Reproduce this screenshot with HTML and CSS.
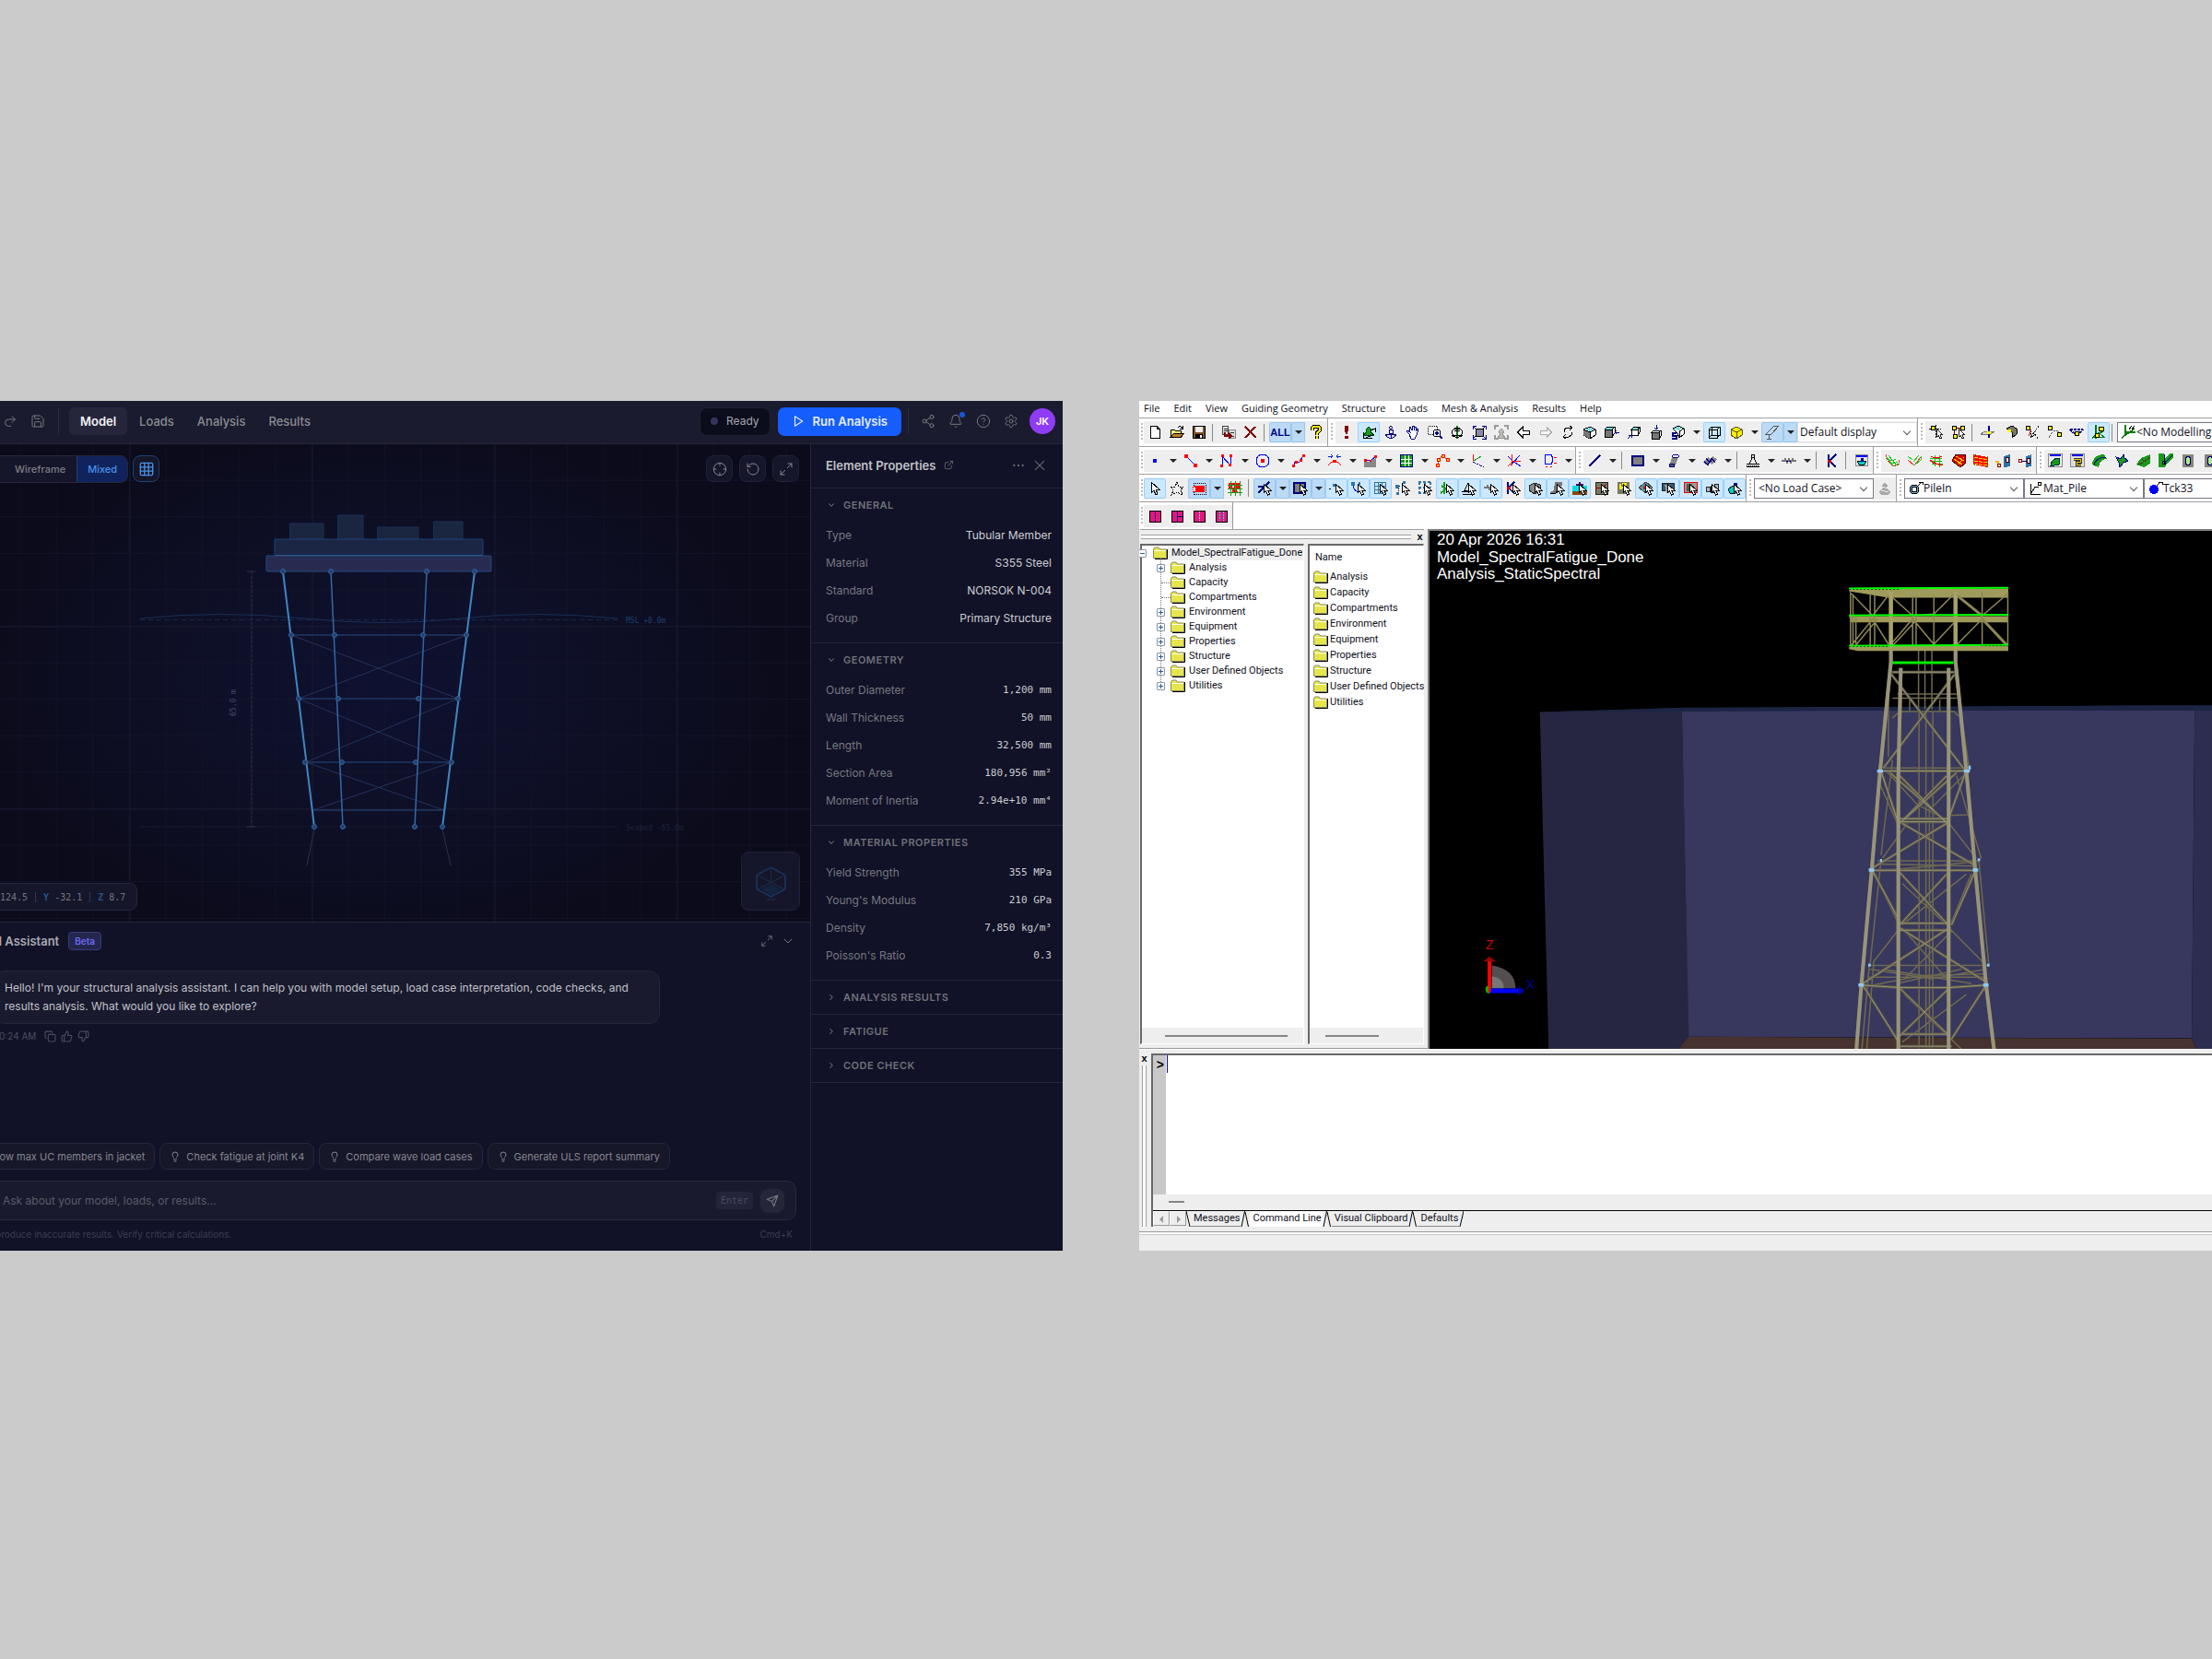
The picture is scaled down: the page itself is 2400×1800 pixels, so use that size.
FILE: index.html
```html
<!DOCTYPE html>
<html lang="en">
<head>
<meta charset="utf-8">
<title>Structural analysis workspaces</title>
<link rel="stylesheet" href="styles.css">
</head>
<body>
<svg class="defs" aria-hidden="true">
  <symbol id="cur" viewBox="0 0 16 16"><path d="M7 3v10l2.500-2.500 2 4.500 2-1-2-4H15z" fill="#fff" stroke="#000"/></symbol>
  <symbol id="folder" viewBox="0 0 16 14"><path d="M2 13.500h13.500V3" fill="none" stroke="#000" stroke-width="1"/><path d="M.5 12.500V3l1.500-2h4l1.500 2h7v9.500z" fill="#e6e64c" stroke="#8a8a6a"/><path d="M1.500 4.500h12.500" stroke="#fffff0"/></symbol>
  <symbol id="bulb" viewBox="0 0 24 24"><path d="M9 18h6M10 22h4M15 14c.2-1 .7-1.700 1.500-2.500A5.500 5.500 0 0 0 18 8 6 6 0 0 0 6 8c0 1 .2 2.200 1.500 3.500.7.7 1.300 1.500 1.500 2.500"/></symbol>
  <symbol id="down" viewBox="0 0 24 24"><path d="m6 9 6 6 6-6"/></symbol>
  <symbol id="next" viewBox="0 0 24 24"><path d="m9 6 6 6-6 6"/></symbol>
  <symbol id="expand" viewBox="0 0 24 24"><path d="M15 3h6v6M9 21H3v-6M21 3l-7 7M3 21l7-7"/></symbol>
  <symbol id="slant" viewBox="0 0 10 17"><path d="M4.500 0 1 17M5 1 8.500 17" fill="none" stroke="#000"/></symbol>
</svg>
<main class="desk">
<section class="app" aria-label="Modern workspace">
  <header class="bar">
    <button class="ib" aria-label="Undo"><svg viewBox="0 0 24 24"><path d="m9 14-5-5 5-5M4 9h10a6 6 0 0 1 0 12h-3"/></svg></button>
    <button class="ib" aria-label="Redo"><svg viewBox="0 0 24 24"><path d="m15 14 5-5-5-5M20 9H9.500a5.500 5.500 0 0 0 0 11H13"/></svg></button>
    <button class="ib" aria-label="Save"><svg viewBox="0 0 24 24"><path d="M15.200 3a2 2 0 0 1 1.400.6l3.800 3.800a2 2 0 0 1 .6 1.400V19a2 2 0 0 1-2 2H5a2 2 0 0 1-2-2V5a2 2 0 0 1 2-2zM17 21v-7a1 1 0 0 0-1-1H8a1 1 0 0 0-1 1v7M7 3v4a1 1 0 0 0 1 1h7"/></svg></button>
    <i class="rule rule-l"></i>
    <nav class="tabs"><button class="tab on">Model</button><button class="tab">Loads</button><button class="tab">Analysis</button><button class="tab">Results</button></nav>
    <span class="ready"><i></i>Ready</span>
    <button class="run"><svg viewBox="0 0 24 24"><path d="M6 3l14 9-14 9z"/></svg>Run Analysis</button>
    <i class="rule"></i>
    <button class="ib" aria-label="Share"><svg viewBox="0 0 24 24"><circle cx="18" cy="5" r="3"/><circle cx="6" cy="12" r="3"/><circle cx="18" cy="19" r="3"/><path d="m8.600 13.500 6.800 4M15.400 6.500l-6.800 4"/></svg></button>
    <button class="ib bell" aria-label="Notifications"><svg viewBox="0 0 24 24"><path d="M10.300 21a2 2 0 0 0 3.400 0M3.300 15.300A1 1 0 0 0 4 17h16a1 1 0 0 0 .7-1.700C19.400 14 18 12.500 18 8A6 6 0 0 0 6 8c0 4.500-1.400 6-2.700 7.300"/></svg></button>
    <button class="ib" aria-label="Help"><svg viewBox="0 0 24 24"><circle cx="12" cy="12" r="10"/><path d="M9.100 9a3 3 0 0 1 5.800 1c0 2-3 3-3 3M12 17h.01"/></svg></button>
    <button class="ib" aria-label="Settings"><svg viewBox="0 0 24 24"><path d="M12.200 2h-.4a2 2 0 0 0-2 2v.2a2 2 0 0 1-1 1.700l-.4.300a2 2 0 0 1-2 0l-.2-.1a2 2 0 0 0-2.700.7l-.2.400a2 2 0 0 0 .7 2.700l.2.100a2 2 0 0 1 1 1.700v.5a2 2 0 0 1-1 1.800l-.2.100a2 2 0 0 0-.7 2.700l.2.400a2 2 0 0 0 2.700.7l.2-.1a2 2 0 0 1 2 0l.4.300a2 2 0 0 1 1 1.700v.2a2 2 0 0 0 2 2h.4a2 2 0 0 0 2-2v-.2a2 2 0 0 1 1-1.700l.4-.3a2 2 0 0 1 2 0l.2.100a2 2 0 0 0 2.700-.7l.2-.4a2 2 0 0 0-.7-2.700l-.2-.1a2 2 0 0 1-1-1.800v-.5a2 2 0 0 1 1-1.700l.2-.1a2 2 0 0 0 .7-2.700l-.2-.4a2 2 0 0 0-2.700-.7l-.2.100a2 2 0 0 1-2 0l-.4-.3a2 2 0 0 1-1-1.700V4a2 2 0 0 0-2-2z"/><circle cx="12" cy="12" r="3"/></svg></button>
    <button class="avatar">JK</button>
  </header>
  <div class="work">
    <div class="left">
      <div class="viewport">
        <svg class="scene" viewBox="-40 482 919 518" preserveAspectRatio="xMidYMid meet">
          <defs>
            <pattern id="gmin" x="21" y="482" width="39.600" height="39.600" patternUnits="userSpaceOnUse"><path d="M0 0V39.600M0 39.400H39.600" stroke="#14152a" fill="none"/></pattern>
          </defs>
          <rect x="-40" y="482" width="920" height="518" fill="url(#gmin)"/>
          <path d="M141 482V1000M339 482V1000M537 482V1000M735 482V1000M-40 680H880M-40 878H880" stroke="#181a30"/>
          <g fill="#1a2540" stroke="#1d3153"><path d="M315 568h36v17h-36zM367 559h27v26h-27zM410 572h44v13h-44zM471 566h31v19h-31z"/></g>
          <rect x="298" y="585" width="226" height="18" rx="1" fill="#1b2645" stroke="#1f4074"/>
          <rect x="289" y="603" width="244" height="17" rx="1" fill="#282b50" stroke="#214a80"/>
          <path d="M299 602.500H523" stroke="#2c5a90"/>
          <path d="M152 671Q240 662 330 671T500 671T670 671" fill="none" stroke="#182f54"/>
          <path d="M152 672.500H670" stroke="#1a2746" stroke-dasharray="5 4"/>
          <path d="M152 897H670" stroke="#191a30"/>
          <g stroke="#24325a" fill="none"><path d="M316 689L497 758M506 689L324 758M324 758L490 827M497 758L332 827M332 827L482 879M490 827L340 879"/></g>
          <path d="M316 689H506M324 758H497M332 827H490M340 879H482" stroke="#264a7c" fill="none"/>
          <path d="M359 620L372 897M463 620L450 897" stroke="#3468a4" stroke-width="1.500" fill="none"/>
          <path d="M307 620L341 897M515 620L480 897" stroke="#4186c0" stroke-width="2" fill="none"/>
          <path d="M341 900L333 939M480 900L489 939" stroke="#2f2f50" fill="none"/>
          <g fill="#23406e" stroke="#32649c"><circle cx="307" cy="620" r="2.500"/><circle cx="359" cy="620" r="2.500"/><circle cx="463" cy="620" r="2.500"/><circle cx="515" cy="620" r="2.500"/><circle cx="316" cy="689" r="2.500"/><circle cx="363" cy="689" r="2.500"/><circle cx="459" cy="689" r="2.500"/><circle cx="506" cy="689" r="2.500"/><circle cx="324" cy="758" r="2.500"/><circle cx="367" cy="758" r="2.500"/><circle cx="454" cy="758" r="2.500"/><circle cx="497" cy="758" r="2.500"/><circle cx="331" cy="827" r="2.500"/><circle cx="371" cy="827" r="2.500"/><circle cx="451" cy="827" r="2.500"/><circle cx="490" cy="827" r="2.500"/><circle cx="341" cy="897" r="2.500"/><circle cx="372" cy="897" r="2.500"/><circle cx="450" cy="897" r="2.500"/><circle cx="480" cy="897" r="2.500"/></g>
          <path d="M273 620V897" stroke="#30304a" stroke-dasharray="3 2"/><path d="M268 620h9M268 897h9" stroke="#30304a"/>
          <text class="dim" transform="translate(256 777) rotate(-90)">65.0 m</text>
          <text class="msl" x="679" y="676">MSL +0.0m</text>
          <text class="bed" x="679" y="901">Seabed -65.0m</text>
        </svg>
        <div class="vt vt-l">
          <div class="seg"><button>Wireframe</button><button class="on">Mixed</button></div>
          <button class="vb on" aria-label="Grid"><svg viewBox="0 0 24 24"><rect x="2" y="2" width="20" height="20" rx="2"/><path d="M2 8.700h20M2 15.300h20M8.700 2v20M15.300 2v20"/></svg></button>
        </div>
        <div class="vt vt-r">
          <button class="vb" aria-label="Center"><svg viewBox="0 0 24 24"><circle cx="12" cy="12" r="10"/><path d="M22 12h-4M6 12H2M12 6V2M12 22v-4"/></svg></button>
          <button class="vb" aria-label="Reset"><svg viewBox="0 0 24 24"><path d="M3 12a9 9 0 1 0 9-9 9.800 9.800 0 0 0-6.700 2.700L3 8M3 3v5h5"/></svg></button>
          <button class="vb" aria-label="Fullscreen"><svg><use href="#expand"/></svg></button>
        </div>
        <div class="coords"><span>124.5</span><i></i><span><b>Y</b> -32.1</span><i></i><span><b>Z</b> 8.7</span></div>
        <button class="cube" aria-label="View cube"><svg viewBox="0 0 40 40"><path d="M20 23l11 5-11 7-11-7z" fill="#14233f" stroke="none"/><path d="M20 5l15 8v15l-15 8-15-8V13z" fill="none" stroke="#1c3560" stroke-width="1.500"/><path d="M5 13l15 8 15-8M20 5v16M6 28l14-7 14 7" fill="none" stroke="#1d2a45"/><path d="M16 39h8" stroke="#2a2c48"/></svg></button>
      </div>
      <section class="chat">
        <header class="chead"><h2>AI Assistant</h2><span class="beta">Beta</span><button class="ci" aria-label="Expand"><svg><use href="#expand"/></svg></button><button class="ci" aria-label="Collapse"><svg class="big"><use href="#down"/></svg></button></header>
        <div class="log">
          <p class="bubble">Hello! I'm your structural analysis assistant. I can help you with model setup, load case interpretation, code checks, and results analysis. What would you like to explore?</p>
          <div class="meta"><span>10:24 AM</span>
            <svg viewBox="0 0 24 24"><rect x="8" y="8" width="14" height="14" rx="2"/><path d="M4 16a2 2 0 0 1-2-2V4c0-1.100.9-2 2-2h10a2 2 0 0 1 2 2"/></svg>
            <svg viewBox="0 0 24 24"><path d="M7 10v12M15 5.900 14 10h5.800a2 2 0 0 1 2 2.600l-2.400 8a2 2 0 0 1-1.900 1.400H4a2 2 0 0 1-2-2v-8a2 2 0 0 1 2-2h2.800a2 2 0 0 0 1.800-1.100L12 2a3.100 3.100 0 0 1 3 3.900z"/></svg>
            <svg viewBox="0 0 24 24"><path d="M17 14V2M9 18.100 10 14H4.200a2 2 0 0 1-2-2.600l2.400-8A2 2 0 0 1 6.500 2H20a2 2 0 0 1 2 2v8a2 2 0 0 1-2 2h-2.800a2 2 0 0 0-1.800 1.100L12 22a3.100 3.100 0 0 1-3-3.900z"/></svg>
          </div>
        </div>
        <div class="chips"><button><svg><use href="#bulb"/></svg>Show max UC members in jacket</button><button><svg><use href="#bulb"/></svg>Check fatigue at joint K4</button><button><svg><use href="#bulb"/></svg>Compare wave load cases</button><button><svg><use href="#bulb"/></svg>Generate ULS report summary</button></div>
        <div class="ask"><input type="text" aria-label="Message" placeholder="Ask about your model, loads, or results..."><kbd>Enter</kbd><button aria-label="Send"><svg viewBox="0 0 24 24"><path d="M22 2 15 22l-4-9-9-4zM22 2 11 13"/></svg></button></div>
        <footer class="note"><span>AI may produce inaccurate results. Verify critical calculations.</span><span>Cmd+K</span></footer>
      </section>
    </div>
    <aside class="props">
      <header class="phead"><h2>Element Properties</h2><svg viewBox="0 0 24 24"><path d="M15 3h6v6M10 14 21 3M18 13v6a2 2 0 0 1-2 2H5a2 2 0 0 1-2-2V8a2 2 0 0 1 2-2h6"/></svg><button aria-label="More"><svg viewBox="0 0 24 24"><circle cx="4" cy="12" r="1"/><circle cx="12" cy="12" r="1"/><circle cx="20" cy="12" r="1"/></svg></button><button aria-label="Close"><svg viewBox="0 0 24 24"><path d="M20 4 4 20M4 4l16 16"/></svg></button></header>
      <section class="grp"><h3><svg><use href="#down"/></svg>GENERAL</h3><dl><div><dt>Type</dt><dd>Tubular Member</dd></div><div><dt>Material</dt><dd>S355 Steel</dd></div><div><dt>Standard</dt><dd>NORSOK N-004</dd></div><div><dt>Group</dt><dd>Primary Structure</dd></div></dl></section>
      <section class="grp num"><h3><svg><use href="#down"/></svg>GEOMETRY</h3><dl><div><dt>Outer Diameter</dt><dd>1,200 mm</dd></div><div><dt>Wall Thickness</dt><dd>50 mm</dd></div><div><dt>Length</dt><dd>32,500 mm</dd></div><div><dt>Section Area</dt><dd>180,956 mm²</dd></div><div><dt>Moment of Inertia</dt><dd>2.94e+10 mm⁴</dd></div></dl></section>
      <section class="grp num"><h3><svg><use href="#down"/></svg>MATERIAL PROPERTIES</h3><dl><div><dt>Yield Strength</dt><dd>355 MPa</dd></div><div><dt>Young's Modulus</dt><dd>210 GPa</dd></div><div><dt>Density</dt><dd>7,850 kg/m³</dd></div><div><dt>Poisson's Ratio</dt><dd>0.3</dd></div></dl></section>
      <section class="grp"><h3><svg><use href="#next"/></svg>ANALYSIS RESULTS</h3></section>
      <section class="grp"><h3><svg><use href="#next"/></svg>FATIGUE</h3></section>
      <section class="grp"><h3><svg><use href="#next"/></svg>CODE CHECK</h3></section>
    </aside>
  </div>
</section>

<section class="win" aria-label="Classic workspace">
  <nav class="menu"><button>File</button><button>Edit</button><button>View</button><button>Guiding Geometry</button><button>Structure</button><button>Loads</button><button>Mesh &amp; Analysis</button><button>Results</button><button>Help</button></nav>
  <div class="row">
    <i class="grip first"></i>
    <div class="band">
      <button class="t" title="New"><svg viewBox="0 0 16 16"><path d="M3 1.500h7l3 3v10H3z" fill="#fff" stroke="#000"/><path d="M10 1.500v3h3" fill="none" stroke="#000"/></svg></button>
      <button class="t" title="Open"><svg viewBox="0 0 16 16"><path d="M1 13V5h4l1 1h6v3" fill="#ffff80" stroke="#000"/><path d="M1 13.500 5 9h11l-4 4.500z" fill="#c08030" stroke="#000"/><path d="M9 3q3-3 5 1M14 1v3h-3" fill="none" stroke="#000"/></svg></button>
      <button class="t" title="Save"><svg viewBox="0 0 16 16"><path d="M1.500 1.500h13v13h-13z" fill="#805020" stroke="#000"/><path d="M4 2h8v6H4z" fill="#eee"/><path d="M4 10h8v4H4z" fill="#000"/><path d="M9 11h2v3H9z" fill="#fff"/></svg></button>
      <i class="sep"></i>
      <button class="t" title="Copy"><svg viewBox="0 0 16 16"><path d="M1.500 1.500h6v9h-6z" fill="#ddd" stroke="#444"/><path d="M8.500 5.500h7v9h-7z" fill="#ddd" stroke="#888"/><path d="M3 4h4M3 6h4M10 8h4M10 12h4" stroke="#333"/><path d="M4 8v4h6M8 9l3 3-3 3" stroke="#800000" fill="none" stroke-width="2"/></svg></button>
      <button class="t" title="Delete"><svg viewBox="0 0 16 16"><path d="M2 2l12 12M13 2 2 14" stroke="#800000" stroke-width="2"/></svg></button>
      <i class="sep"></i>
      <button class="t on all">ALL</button><button class="a on" aria-label="More"></button>
      <button class="t" title="Help"><svg viewBox="0 0 16 16"><path d="M4 6V3l2-1.500h4L12 3v3L9 8.500V11M8.500 12v3" stroke="#000" stroke-width="4" fill="none"/><path d="M4 6V3l2-1.500h4L12 3v3L9 8.500V11M8.500 12v3" stroke="#ffe800" stroke-width="2" fill="none"/></svg></button>
    </div>
    <i class="grip"></i>
    <div class="band">
      <button class="t" title="Alert"><svg viewBox="0 0 16 16"><path d="M6 1h4v4l-1 5H7L6 5zM6 12h4v3H6z" fill="#800000"/></svg></button>
      <button class="t on" title="View tools"><svg viewBox="0 0 16 16"><path d="M8 2l3 3-1 2 3 4H3l3-4-1-2z" fill="#1a9a1a" stroke="#042"/><path d="M2 8v6h10M10 6l5-2v4M5 14l9-4" stroke="#000" fill="none"/></svg></button>
      <button class="t" title="Anchor"><svg viewBox="0 0 16 16"><path d="M8 1l2 2-2 2-2-2zM6 5h4v4H6zM2 10h12l-2 3-4 2-4-2zM8 9v5" fill="#dde" stroke="#000080"/></svg></button>
      <button class="t" title="Pan"><svg viewBox="0 0 16 16"><path d="M4 10 1 7l1-1 3 2-1-5 1-1 2 4V1h2v5l1-4h1v5l2-3 1 1-2 6-2 4H6z" fill="#fff" stroke="#000080"/></svg></button>
      <button class="t" title="Zoom window"><svg viewBox="0 0 16 16"><path d="M.5 1.500h10v9H.5z" fill="none" stroke="#000" stroke-dasharray="1 1"/><circle cx="10" cy="9" r="4" fill="#fff" stroke="#000"/><path d="M13 12l3 3M8 9h4M10 7v4" stroke="#000080" stroke-width="1.500"/></svg></button>
      <button class="t" title="Rotate"><svg viewBox="0 0 16 16"><path d="M7 1h2v14H7z" fill="#0a7a0a"/><ellipse cx="8" cy="8" rx="6" ry="4" fill="none" stroke="#000"/><path d="M2 11q6 5 12 0M5 3h6M5 6h6" fill="none" stroke="#000"/></svg></button>
      <button class="t" title="Fit all"><svg viewBox="0 0 16 16"><path d="M4 4h8v8H4z" fill="#88a" stroke="#000"/><path d="M1 5V1h4M11 1h4v4M15 11v4h-4M5 15H1v-4M1 1l3 3M15 1l-3 3M1 15l3-3M15 15l-3-3" fill="none" stroke="#000080"/></svg></button>
      <button class="t" title="Fit selection"><svg viewBox="0 0 16 16"><path d="M8 4l3 3-2 3 3 4H4l3-4-2-3z" fill="#bbb" stroke="#999"/><path d="M1 5V1h4M11 1h4v4M15 11v4h-4M5 15H1v-4" fill="none" stroke="#999" stroke-width="1.500"/></svg></button>
      <button class="t" title="Back"><svg viewBox="0 0 16 16"><path d="M1.500 8 7 2.500V6h7v4H7v3.500z" fill="#fff" stroke="#000"/></svg></button>
      <button class="t" title="Forward"><svg viewBox="0 0 16 16"><path d="M14.500 8 9 2.500V6H2v4h7v3.500z" fill="#f4f4f4" stroke="#aaa"/></svg></button>
      <button class="t" title="Refresh"><svg viewBox="0 0 16 16"><path d="M4 8V5l3-2h5M10 1l3 2-3 3M12 8v3l-3 2H4M6 10l-3 3 3 2" fill="none" stroke="#000"/></svg></button>
      <button class="t" title="Iso"><svg viewBox="0 0 16 16"><path d="M1 5l7-3 6 3v6l-6 4-7-4z" fill="#fff" stroke="#000"/><path d="M1 5l7 3v7l-7-4z" fill="#777"/><path d="M3 5l5-2 4 2-4 2z" fill="#7dd"/><path d="M1 5l7 3 6-3M8 8v7" fill="none" stroke="#000"/></svg></button>
      <button class="t" title="From right"><svg viewBox="0 0 16 16"><path d="M0 5h8v8H0z" fill="#777" stroke="#000"/><path d="M0 5l3-3h8L8 5z" fill="#7dd" stroke="#000"/><path d="M11 2v7l-3 4" fill="none" stroke="#000"/><path d="M16 8h-5M13 6l-2 2 2 2" stroke="#000080" fill="none"/></svg></button>
      <button class="t" title="From front"><svg viewBox="0 0 16 16"><path d="M5 5h7v6H5z" fill="#fff" stroke="#000"/><path d="M5 5l3-3h6l-2 3z" fill="#7dd" stroke="#000"/><path d="M14 2v6l-2 3" stroke="#000" fill="none"/><path d="M1 15l4-4M2 11h3v3" stroke="#000080" fill="none"/></svg></button>
      <button class="t" title="From top"><svg viewBox="0 0 16 16"><path d="M3 8h8v7H3z" fill="#777" stroke="#000"/><path d="M3 8l2-2h8l-2 2zM13 6v6l-2 3" fill="#fff" stroke="#000"/><path d="M8 0v5M6 3l2 2 2-2" stroke="#000080" fill="none"/></svg></button>
      <button class="t" title="Saved view"><svg viewBox="0 0 16 16"><path d="M2 4l6-3 6 3v6l-5 4-2-5z" fill="#fff" stroke="#000"/><path d="M3 4l5-2 4 2-4 2z" fill="#7dd"/><path d="M9 7v7M9 7l5-3" stroke="#000"/><path d="M6 9H2v3h4v3H1" fill="none" stroke="#000080" stroke-width="1.500"/></svg></button><button class="a" aria-label="More"></button>
      <button class="t on" title="Wire cube"><svg viewBox="0 0 16 16"><path d="M2 5h9v9H2zM5 2h9v9H5zM2 5l3-3M11 5l3-3M11 14l3-3M2 14l3-3" fill="none" stroke="#000"/></svg></button>
      <button class="t" title="Solid cube"><svg viewBox="0 0 16 16"><path d="M2 5l6-3 6 3v6l-6 4-6-4z" fill="#ffee00" stroke="#553"/><path d="M2 5l6 3 6-3M8 8v7" fill="none" stroke="#553"/></svg></button><button class="a" aria-label="More"></button>
      <button class="t sp" title="Profile"><svg viewBox="0 0 16 16"><path d="M1 10 10 1h5L7 10zM2 15h5M4.500 10v5" fill="none" stroke="#555"/></svg></button><button class="a sp" aria-label="More"></button>
      <label class="combo w128 soft"><select aria-label="Display mode"><option>Default display</option></select></label>
    </div>
    <i class="grip"></i>
    <div class="band">
      <button class="t" title="Snap A"><svg viewBox="0 0 16 16"><path d="M0 4h13M7 0v14" stroke="#000" stroke-dasharray="2 1"/><path d="M2 1.500h4v4H2z" fill="#ff0" stroke="#000"/><use href="#cur" width="14" height="14" x="2" y="2"/></svg></button>
      <button class="t" title="Snap B"><svg viewBox="0 0 16 16"><path d="M3 3h10M3 3v9" stroke="#800000"/><path d="M1 1.500h4v4H1zM10 1.500h4v4h-4zM2 10.500h4v4H2z" fill="#ff0" stroke="#000"/><use href="#cur" width="14" height="14" x="2" y="2"/></svg></button>
      <i class="sep"></i>
      <button class="t" title="Snap point"><svg viewBox="0 0 16 16"><path d="M0 10h11l4-3H5z" fill="#ddd" stroke="#777"/><path d="M9 1v13" stroke="#000080" stroke-width="1.500"/><path d="M7 7h4v3H7z" fill="#ff0"/></svg></button>
      <button class="t" title="Snap face"><svg viewBox="0 0 16 16"><path d="M4 4l6-3 5 3v6l-5 4V8z" fill="#776" stroke="#000"/><path d="M5 5h4v3H5z" fill="#ff0"/></svg></button>
      <button class="t" title="Snap curve"><svg viewBox="0 0 16 16"><path d="M15 1 6 14M6 6v8l5-4 3 5" stroke="#000" fill="none" stroke-dasharray="2 1"/><path d="M7 5 4 12" stroke="#d00"/><path d="M1 1.500h4v4H1z" fill="#ff0" stroke="#000"/></svg></button>
      <button class="t" title="Snap arc"><svg viewBox="0 0 16 16"><path d="M2 14Q7 2 15 9" fill="none" stroke="#555" stroke-dasharray="3 1"/><path d="M1 1.500h4v4H1zM11 8.500h4v4h-4z" fill="#ff0" stroke="#000"/></svg></button>
      <button class="t" title="Snap box"><svg viewBox="0 0 16 16"><path d="M1 5h14M1 5q7 9 14 0" fill="none" stroke="#000080" stroke-width="1.500" stroke-dasharray="3 1"/><path d="M6 7.500h4v4H6z" fill="#ff0" stroke="#000"/></svg></button>
      <button class="t on" title="Local axes"><svg viewBox="0 0 16 16"><path d="M5 0v15M1 14 14 6" stroke="#087a08" stroke-width="2"/><path d="M8 2.500h5v4H8zM4 9.500h4v4H4z" fill="#ff0" stroke="#000"/><path d="M9 13h6M7 8l7 5" stroke="#087a08"/></svg></button>
      <i class="sep"></i>
      <label class="combo w170"><svg viewBox="0 0 16 16"><path d="M4 0v11M0 14 14 4M4 8h11" stroke="#087a08" stroke-width="1.500"/><path d="M8 5l3-4M11 5l3-4" stroke="#000"/></svg><select aria-label="Modelling set"><option>&lt;No Modelling Set&gt;</option></select></label>
    </div>
  </div>
  <div class="row">
    <i class="grip first"></i>
    <div class="band">
      <button class="t" title="Point"><svg viewBox="0 0 16 16"><path d="M6 6h4v4H6z" fill="#00f"/></svg></button><button class="a" aria-label="More"></button>
      <button class="t" title="Line"><svg viewBox="0 0 16 16"><path d="M3 3l10 10" stroke="#00f"/><path d="M1 1h4v4H1zM11 11h4v4h-4z" fill="red"/></svg></button><button class="a" aria-label="More"></button>
      <button class="t" title="Polyline"><svg viewBox="0 0 16 16"><path d="M3 14V3l9 10V2" fill="none" stroke="#00f"/><path d="M1 12h3v3H1zM2 1h3v3H2zM10 11h3v3h-3zM11 1h3v3h-3z" fill="red"/></svg></button><button class="a" aria-label="More"></button>
      <button class="t" title="Circle"><svg viewBox="0 0 16 16"><circle cx="8" cy="8" r="7" fill="none" stroke="#00f"/><path d="M6 6h4v4H6z" fill="red"/></svg></button><button class="a" aria-label="More"></button>
      <button class="t" title="Spline"><svg viewBox="0 0 16 16"><path d="M3 13V9h6l4-7" fill="none" stroke="#00f"/><path d="M1 12h3v3H1zM4 8h3v3H4zM9 6h3v3H9zM12 1h3v3h-3z" fill="red"/></svg></button><button class="a" aria-label="More"></button>
      <button class="t" title="Tangent"><svg viewBox="0 0 16 16"><path d="M1 3h5M4 1l2 2-2 2M15 3h-5M12 1l-2 2 2 2" fill="none" stroke="#0020c0"/><path d="M1 13q7-9 14 0" fill="none" stroke="red"/><path d="M6 7h4v3H6z" fill="red"/></svg></button><button class="a" aria-label="More"></button>
      <button class="t" title="Profile curve"><svg viewBox="0 0 16 16"><path d="M1 9h5l3-2 5-2v10H1z" fill="#888"/><path d="M2 7q6 3 11-4" fill="none" stroke="#00f"/><path d="M1 6h3v3H1zM12 2h3v3h-3zM7 7h2v2H7z" fill="red"/></svg></button><button class="a" aria-label="More"></button>
      <button class="t" title="Grid"><svg viewBox="0 0 16 16"><path d="M1.500 1.500h13v13h-13z" fill="#1a9a1a" stroke="#008"/><path d="M6 2v12M10 2v12M2 6h12M2 10h12" stroke="#fff"/></svg></button><button class="a" aria-label="More"></button>
      <button class="t" title="Path"><svg viewBox="0 0 16 16"><path d="M3 14V7l5-5 5 5" fill="none" stroke="#a06020"/><path d="M1.500 11.500h3v3h-3zM2 5.500h3v3H2zM7 1.500h3v3H7zM12 5.500h3v3h-3z" fill="#fd0" stroke="red"/></svg></button><button class="a" aria-label="More"></button>
      <button class="t" title="Rays"><svg viewBox="0 0 16 16"><path d="M2 1v7" stroke="red"/><path d="M3 8l8-5" stroke="#1a9a1a"/><path d="M2 9l12 6" stroke="#008" stroke-dasharray="3 1"/></svg></button><button class="a" aria-label="More"></button>
      <button class="t" title="Intersect"><svg viewBox="0 0 16 16"><path d="M1 3l5 5M14 2 4 13" stroke="#00f"/><path d="M6 8l9 6" stroke="#00f"/><path d="M5 1v12M1 14l6-6h8" stroke="red" fill="none"/></svg></button><button class="a" aria-label="More"></button>
      <button class="t" title="Offset"><svg viewBox="0 0 16 16"><path d="M3 1.500h6l1 2v6l-1 2H3l-1-2v-6z" fill="none" stroke="#00f"/><path d="M12 4h3M12 10h3M3 14h2M8 14h2" stroke="red"/></svg></button><button class="a" aria-label="More"></button>
    </div>
    <i class="grip"></i>
    <div class="band">
      <button class="t" title="Beam"><svg viewBox="0 0 16 16"><path d="M2 14 14 2" stroke="#000080" stroke-width="1.500"/></svg></button><button class="a" aria-label="More"></button>
      <i class="sep"></i>
      <button class="t" title="Plate"><svg viewBox="0 0 16 16"><path d="M2 3h12v10H2z" fill="#808080" stroke="#000080" stroke-width="2"/></svg></button><button class="a" aria-label="More"></button>
      <button class="t" title="Shell"><svg viewBox="0 0 16 16"><path d="M3 12 7 3h6l-3 10q-4 4-7-1z" fill="#888"/><ellipse cx="10" cy="3" rx="3.500" ry="2" fill="#fff" stroke="#000080"/><ellipse cx="6" cy="13" rx="3" ry="2" fill="#556" stroke="#000080"/></svg></button><button class="a" aria-label="More"></button>
      <button class="t" title="Corrugated"><svg viewBox="0 0 16 16"><path d="M1 10l5-6 3 2 2-3 5 3-5 6-3-2-2 3z" fill="#888"/><path d="M4 6l4 3 2-3 4 3M2 9l4 3 3-4" fill="none" stroke="#000080" stroke-width="1.500"/></svg></button><button class="a" aria-label="More"></button>
      <i class="sep"></i>
      <button class="t" title="Support"><svg viewBox="0 0 16 16"><circle cx="8" cy="3" r="2" fill="none" stroke="#000"/><path d="M7 5 4 11h8L9 5M1 11.500h14M1 14h14" fill="none" stroke="#000"/><path d="M1 14h14" stroke="#000" stroke-width="2" stroke-dasharray="1 1"/></svg></button><button class="a" aria-label="More"></button>
      <button class="t" title="Spring"><svg viewBox="0 0 16 16"><path d="M0 8h3l1-2 2 4 2-4 2 4 2-4 1 2h3" fill="none" stroke="#777" stroke-width="1.500"/><path d="M5 8h6" stroke="#000080" stroke-dasharray="2 1"/></svg></button><button class="a" aria-label="More"></button>
      <i class="sep"></i>
      <button class="t" title="Joint"><svg viewBox="0 0 16 16"><path d="M4 1v14M12 1 5 8l7 7" fill="none" stroke="#000080" stroke-width="1.500"/><path d="M3 7h4v3H3z" fill="#c00"/></svg></button>
      <i class="sep"></i>
      <button class="t" title="Equipment"><svg viewBox="0 0 16 16"><path d="M1.500 1.500h13v12h-13z" fill="#e8e8e8" stroke="#888"/><path d="M2 3h12" stroke="#00f" stroke-width="2"/><path d="M3 8h10l-2 4H5z" fill="#0cc" stroke="#000"/><path d="M7 5h3v4H7z" fill="#008"/></svg></button>
    </div>
    <i class="grip"></i>
    <div class="band">
      <button class="t" title="Load mesh"><svg viewBox="0 0 16 16"><path d="M1 3l8 10M4 2l8 10M2 6q6 3 10 0M5 10q5 2 9-1M8 13q4 1 7-2" fill="none" stroke="#1c1"/><path d="M1 1v4l8 9 6-2V7" fill="none" stroke="#e33" stroke-dasharray="3 1"/></svg></button>
      <button class="t" title="Load V"><svg viewBox="0 0 16 16"><path d="M1 7l7 6 7-9" fill="none" stroke="#e33"/><path d="M1 3l5 4M7 9l6-7M8 13l7-6V3" fill="none" stroke="#1c1"/></svg></button>
      <button class="t" title="Load surface"><svg viewBox="0 0 16 16"><path d="M1 5h13M1 8h13M3 11h12M6 2v12M11 2v13" fill="none" stroke="#1b1"/><path d="M2 3q7 4 12 0M1 7q7 6 14 5M4 10l9 3" fill="none" stroke="red"/></svg></button>
      <button class="t" title="Pressure A"><svg viewBox="0 0 16 16"><path d="M1 8 5 1h10v10l-5 4z" fill="#d00" stroke="#400"/><path d="M3 6l9 6M5 3l9 5M8 12l6-8" stroke="#fd0" stroke-dasharray="3 1"/></svg></button>
      <button class="t" title="Pressure B"><svg viewBox="0 0 16 16"><path d="M0 1l16 3v11L0 12z" fill="#f00"/><path d="M1 4.500l14 2M1 8l14 2M1 11l14 2" stroke="#fd0" stroke-width="1" stroke-dasharray="4 1"/><path d="M1 1v12M15 3v12" stroke="#1a1" stroke-dasharray="2 3"/></svg></button>
      <button class="t" title="Point mass"><svg viewBox="0 0 16 16"><path d="M9 3l7-2v13l-7 1z" fill="#2e74a8"/><ellipse cx="13" cy="7" rx="2" ry="3" fill="#fff" stroke="#400"/><path d="M0 9h3v3" stroke="#eb0" fill="none" stroke-width="2"/><circle cx="4" cy="13" r="2" fill="#ee8" stroke="#800"/></svg></button>
      <button class="t" title="Link"><svg viewBox="0 0 16 16"><path d="M9 3l6-2v13l-6 1z" fill="#2e74a8"/><ellipse cx="12" cy="8" rx="2" ry="3" fill="#fff" stroke="#400"/><circle cx="3" cy="8" r="2" fill="#fff" stroke="#800"/><path d="M5 8h5" stroke="#006"/></svg></button>
    </div>
    <i class="grip"></i>
    <div class="band">
      <button class="t" title="Mesh window"><svg viewBox="0 0 16 16"><path d="M.5.5h15v14H.5z" fill="#eee" stroke="#888"/><path d="M2 2h12" stroke="#00f" stroke-width="2"/><path d="M3 13Q4 5 12 5v7l-5 1z" fill="#1a9a1a" stroke="#024"/></svg></button>
      <button class="t" title="Mesh options"><svg viewBox="0 0 16 16"><path d="M.5.5h15v14H.5z" fill="#ddd" stroke="#888"/><path d="M2 2h12" stroke="#00f" stroke-width="2"/><path d="M4 6h7v3H7v3h5" fill="none" stroke="#333" stroke-width="3"/><path d="M4 6h7v3H7v3h5" fill="none" stroke="#ec0"/></svg></button>
      <button class="t" title="Mesh curved"><svg viewBox="0 0 16 16"><path d="M0 12Q1 1 13 1l3 5Q8 6 7 15z" fill="#1a9a1a"/><path d="M2 13Q4 4 15 4" fill="none" stroke="#008"/></svg></button>
      <button class="t" title="Mesh patch"><svg viewBox="0 0 16 16"><path d="M2 4l5 2 3-5 1 4 4 3-5 2-4 5-1-5z" fill="#1a9a1a" stroke="#008"/></svg></button>
      <button class="t" title="Mesh split"><svg viewBox="0 0 16 16"><path d="M0 12 5 5l10-4v10l-7 4z" fill="#1a9a1a"/><path d="M2 12l5-2 8-6M6 6l3 3" fill="none" stroke="#533"/></svg></button>
      <button class="t" title="Mesh joint"><svg viewBox="0 0 16 16"><path d="M0 0h6v6l6-6h4v4L8 13l-2 2H0z" fill="#1a9a1a"/><path d="M6 1v10l9-9" stroke="#008" fill="none"/><circle cx="6" cy="10" r="2" fill="none" stroke="#004"/></svg></button>
      <button class="t" title="Hole A"><svg viewBox="0 0 16 16"><path d="M2 1h12v14H2z" fill="#8a8578"/><ellipse cx="8" cy="8" rx="3" ry="4.500" fill="#aee8a0" stroke="#006"/></svg></button>
      <button class="t" title="Hole B"><svg viewBox="0 0 16 16"><path d="M2 1h12v14H2z" fill="#8a8578"/><ellipse cx="8" cy="8" rx="3" ry="4.500" fill="#aee8a0" stroke="#006"/></svg></button>
    </div>
  </div>
  <div class="row">
    <i class="grip first"></i>
    <div class="band">
      <button class="t on" title="Select"><svg viewBox="0 0 16 16"><path d="M4 1v12l3-3 2 5 2-1-2-5h4z" fill="#fff" stroke="#000"/></svg></button>
      <button class="t" title="Lasso"><svg viewBox="0 0 16 16"><path d="M8 1l2 5h5l-3 4 2 5-6-3-6 3 2-5-3-4h5z" fill="none" stroke="#000" stroke-dasharray="2 1"/></svg></button>
      <button class="t sp" title="Box select"><svg viewBox="0 0 16 16"><path d="M2 2.500h13v12H2z" fill="none" stroke="#000" stroke-dasharray="1 1"/><path d="M2 5h12v7H2z" fill="#f00"/><path d="M1 6h3v5H1z" fill="#fff" stroke="#f00" stroke-dasharray="1 1"/></svg></button><button class="a sp" aria-label="More"></button>
      <button class="t" title="Grid select"><svg viewBox="0 0 16 16"><path d="M1 2h13v6H1zM5 8h6v4H5z" fill="#f00"/><path d="M0 4h16M0 8h16M0 12h16M3 0v16M8 0v16M13 0v16" stroke="#1a9a1a"/><path d="M5 5h2v2H5zM10 9h2v2h-2z" fill="#fff"/></svg></button>
      <i class="sep"></i>
      <button class="t sp" title="Select beams"><svg viewBox="0 0 16 16"><path d="M1 13 13 1M1 6h8" stroke="#000080" stroke-width="2"/><use href="#cur" width="16" height="16"/></svg></button><button class="a sp" aria-label="More"></button>
      <button class="t sp" title="Select plates"><svg viewBox="0 0 16 16"><path d="M1 2h12v11H1z" fill="#808080" stroke="#000080" stroke-width="2"/><use href="#cur" width="16" height="16"/></svg></button><button class="a sp" aria-label="More"></button>
      <button class="t on" title="Select points"><svg viewBox="0 0 16 16"><path d="M4 3h3v3H4z" fill="#2e74a8"/><path d="M0 8h2v1H0z"/><use href="#cur" width="16" height="16"/></svg></button>
      <button class="t on" title="Select curves"><svg viewBox="0 0 16 16"><path d="M2 3q0 9 8 9" fill="none" stroke="#00f"/><path d="M0 1h4v4H0zM8 1h2v3H8z" fill="#2e74a8"/><use href="#cur" width="16" height="16"/></svg></button>
      <button class="t on" title="Select grid"><svg viewBox="0 0 16 16"><path d="M1 1h12v12H1zM5 1v12M9 1v12M1 5h12M1 9h12" fill="none" stroke="#2e74a8"/><use href="#cur" width="16" height="16"/></svg></button>
      <button class="t" title="Select path"><svg viewBox="0 0 16 16"><path d="M3 13V6l6-4" fill="none" stroke="#000" stroke-dasharray="1 1"/><path d="M0 4h4v4H0zM8 0h3v3H8zM1 12h3v3H1z" fill="#2e74a8"/><use href="#cur" width="16" height="16"/></svg></button>
      <button class="t" title="Select nodes"><svg viewBox="0 0 16 16"><path d="M1 1h13M1 7h13M1 13h9M2 1v13M8 1v13M14 1v6" stroke="#2e74a8" stroke-width="2" stroke-dasharray="3 2"/><use href="#cur" width="16" height="16"/></svg></button>
      <button class="t on" title="Select axes"><svg viewBox="0 0 16 16"><path d="M5 1v13M1 13l9-7M2 5l8 6" stroke="#1a9a1a" stroke-width="2"/><use href="#cur" width="16" height="16"/></svg></button>
      <button class="t on" title="Select supports"><svg viewBox="0 0 16 16"><path d="M7 2 3 10h7zM0 11h13M1 14h10" fill="none" stroke="#000"/><use href="#cur" width="16" height="16"/></svg></button>
      <button class="t on" title="Select springs"><svg viewBox="0 0 16 16"><path d="M0 7h3l1-2 2 4 2-4 2 3" fill="none" stroke="#777" stroke-width="2"/><use href="#cur" width="16" height="16"/></svg></button>
      <button class="t" title="Select joints"><svg viewBox="0 0 16 16"><path d="M2 1v13M9 1 3 7l6 7" fill="none" stroke="#000080" stroke-width="1.500"/><path d="M1 6h4v3H1z" fill="#c00"/><use href="#cur" width="16" height="16"/></svg></button>
      <button class="t on" title="Select solids"><svg viewBox="0 0 16 16"><path d="M1 5l6-3 6 2v7l-6 3-6-4z" fill="#888" stroke="#222"/><use href="#cur" width="16" height="16"/></svg></button>
      <button class="t on" title="Select profiles"><svg viewBox="0 0 16 16"><path d="M5 1h8v4H9v5l-3 4H0v-2l4-2z" fill="#777"/><path d="M0 13h6l3-4" stroke="#000" fill="none"/><use href="#cur" width="16" height="16"/></svg></button>
      <button class="t on" title="Select environment"><svg viewBox="0 0 16 16"><path d="M0 5h16v6H0z" fill="#0dd"/><path d="M0 11h16v4H0z" fill="#8a4a10"/><path d="M4 4h8M8 1v10" stroke="#406" stroke-width="2"/><use href="#cur" width="16" height="16"/></svg></button>
      <button class="t" title="Select mass"><svg viewBox="0 0 16 16"><path d="M1 1h13v13H1z" fill="#776" stroke="#222"/><path d="M1 7h7l5-4" stroke="#a00" fill="none"/><use href="#cur" width="16" height="16"/></svg></button>
      <button class="t" title="Select loads"><svg viewBox="0 0 16 16"><path d="M1 1h13v13H1z" fill="#776"/><path d="M4 3v4h6V3H6M3 8h3" stroke="#fe0" stroke-width="1.500" fill="none"/><use href="#cur" width="16" height="16"/></svg></button>
      <button class="t on" title="Select results"><svg viewBox="0 0 16 16"><path d="M0 7l8-6 7 6-7 6z" fill="#888" stroke="#444"/><circle cx="7" cy="7" r="3" fill="#f00" stroke="#0cc"/><use href="#cur" width="16" height="16"/></svg></button>
      <button class="t on" title="Select sections"><svg viewBox="0 0 16 16"><path d="M1 2h13v8H1z" fill="#2e5a88" stroke="#222"/><path d="M4 4h6l-1 9H6z" fill="#998"/><use href="#cur" width="16" height="16"/></svg></button>
      <button class="t on" title="Select framed"><svg viewBox="0 0 16 16"><path d="M1 1h14v11H1z" fill="#999" stroke="#e00"/><path d="M4 3h6v8H4z" fill="#554"/><use href="#cur" width="16" height="16"/></svg></button>
      <button class="t on" title="Select links"><svg viewBox="0 0 16 16"><path d="M1 6h4v5H1zM6 5h4v7H6zM10 3h4v5h-4z" fill="#abc" stroke="#222"/><use href="#cur" width="16" height="16"/></svg></button>
      <button class="t on" title="Select equipment"><svg viewBox="0 0 16 16"><path d="M1 9l5-4 6 3-3 5H3z" fill="#0cc" stroke="#000"/><path d="M7 2h4v5H7z" fill="#008"/><use href="#cur" width="16" height="16"/></svg></button>
    </div>
    <i class="grip"></i>
    <div class="band">
      <label class="combo w130"><select aria-label="Load case"><option>&lt;No Load Case&gt;</option></select></label>
      <button class="t" title="Load tools"><svg viewBox="0 0 16 16"><path d="M8 1l3 4-1 2 4 5-2 3H4l-2-3 4-5-1-2z" fill="#a8a8a8"/><path d="M4 10l8 2M6 6l4 2" stroke="#eee"/></svg></button>
    </div>
    <i class="grip"></i>
    <div class="band">
      <label class="combo w130"><svg viewBox="0 0 16 16"><circle cx="6" cy="9" r="4" fill="none" stroke="#000" stroke-width="3"/><circle cx="6" cy="9" r="4" fill="none" stroke="#6ab0e0"/><path d="M10 5l3-3M11 1h4v3" fill="none" stroke="#000"/></svg><select aria-label="Section"><option>PileIn</option></select></label>
      <label class="combo w130"><svg viewBox="0 0 16 16"><path d="M2 3v11h11M3 13 7 6h4" fill="none" stroke="#000"/><circle cx="12" cy="3" r="2" fill="none" stroke="#000"/></svg><select aria-label="Material"><option>Mat_Pile</option></select></label>
      <label class="combo w130"><svg viewBox="0 0 16 16"><circle cx="6" cy="9" r="5" fill="#00f"/><path d="M9 5l3-3M11 1h4v3" fill="none" stroke="#000"/></svg><select aria-label="Thickness"><option>Tck33</option></select></label>
    </div>
  </div>
  <div class="row last">
    <i class="grip first"></i>
    <div class="band">
      <button class="t" title="Layout 1"><svg viewBox="0 0 16 16"><path d="M2 2h12v12H2z" fill="#e0187c" stroke="#000"/><path d="M8 2v12" stroke="#000080" stroke-dasharray="4 1"/></svg></button>
      <button class="t" title="Layout 2"><svg viewBox="0 0 16 16"><path d="M2 2h12v12H2z" fill="#e0187c" stroke="#000"/><path d="M8 2v12M8 8h6" stroke="#000080"/></svg></button>
      <button class="t" title="Layout 3"><svg viewBox="0 0 16 16"><path d="M2 2h12v12H2z" fill="#e0187c" stroke="#000"/><path d="M8 3v10" stroke="#8cf" stroke-dasharray="2 1"/></svg></button>
      <button class="t" title="Layout 4"><svg viewBox="0 0 16 16"><path d="M2 2h12v12H2z" fill="#e0187c" stroke="#000"/><path d="M6 3v10M10 3v10" stroke="#0ef" stroke-dasharray="2 1"/></svg></button>
    </div>
    <i class="edge"></i>
  </div>
  <div class="mid">
    <div class="dock">
      <div class="handle"><i></i><button aria-label="Close panel">x</button></div>
      <div class="panes">
        <div class="pane tree">
          <ul>
            <li class="root"><i class="box minus"></i><svg><use href="#folder"/></svg><span>Model_SpectralFatigue_Done</span></li>
            <li><i class="box"></i><svg><use href="#folder"/></svg><span>Analysis</span></li>
            <li><i class="leaf"></i><svg><use href="#folder"/></svg><span>Capacity</span></li>
            <li><i class="leaf"></i><svg><use href="#folder"/></svg><span>Compartments</span></li>
            <li><i class="box"></i><svg><use href="#folder"/></svg><span>Environment</span></li>
            <li><i class="box"></i><svg><use href="#folder"/></svg><span>Equipment</span></li>
            <li><i class="box"></i><svg><use href="#folder"/></svg><span>Properties</span></li>
            <li><i class="box"></i><svg><use href="#folder"/></svg><span>Structure</span></li>
            <li><i class="box"></i><svg><use href="#folder"/></svg><span>User Defined Objects</span></li>
            <li><i class="box"></i><svg><use href="#folder"/></svg><span>Utilities</span></li>
          </ul>
          <div class="sb"><i class="thumb1"></i></div>
        </div>
        <div class="pane list">
          <h4>Name</h4>
          <ul>
            <li><svg><use href="#folder"/></svg>Analysis</li><li><svg><use href="#folder"/></svg>Capacity</li><li><svg><use href="#folder"/></svg>Compartments</li><li><svg><use href="#folder"/></svg>Environment</li><li><svg><use href="#folder"/></svg>Equipment</li><li><svg><use href="#folder"/></svg>Properties</li><li><svg><use href="#folder"/></svg>Structure</li><li><svg><use href="#folder"/></svg>User Defined Objects</li><li><svg><use href="#folder"/></svg>Utilities</li>
          </ul>
          <div class="sb"><i class="thumb2"></i></div>
        </div>
      </div>
    </div>
    <div class="view3d">
      <svg class="jacket" viewBox="1550 575 850 563" preserveAspectRatio="xMinYMin slice">
        <g transform="translate(1560 600) scale(.5357 .3444)">
          <path d="M205 499 493 486 508 1523 486 1562H223z" fill="#272642"/>
          <path d="M493 486 1533 478 1527 1528 507 1523z" fill="#38375e"/>
          <path d="M1533 478H1570V1562H1536L1527 1528z" fill="#2d2d50"/>
          <path d="M205 499 493 485 1533 478H1570V494L900 494z" fill="#1b2543"/>
          <path d="M507 1523 1527 1529 1536 1562H486z" fill="#46322f"/>
          <g id="far" fill="none" stroke="#6f6a50" stroke-width="1.500">
            <path d="M973 305V490M986 305V490M1000 305V490M954 442H1050M930 442H1045M920 455H1050M920 518 935 497H1045L1054 512M955 460V494M1016 460V494"/>
            <path d="M974 500V1560M988 500V1560M1002 500V1560M995 800V1560"/>
            <path d="M912 385 912 640M920 650 897 950M1048 385 1075 670M897 965 875 1290M1095 965 1115 1290M873 1300 858 1562M882 1290 868 1562"/>
            <path d="M905 680 970 790 1030 840M1070 690 1000 800M900 960 950 850M1090 960 1035 850M885 1010 930 1160M1080 1010 1040 1160M880 1290 935 1180M1105 1290 1035 1180M940 1040 1030 1170M1070 1010 940 1170M945 1390 1060 1562M1070 1390 940 1540M940 1180 1030 1340M1040 1190 945 1340M1035 825 1072 823M1050 700 1100 960M890 710 930 850"/>
            <path d="M900 675H1075M890 968H1095M895 978 1090 985M890 1000 1000 985 1090 970M875 1298H1115M875 1310 1000 1340 1110 1310M870 1335H1110M880 1360 980 1330 1110 1325M900 1310 1080 1355M930 1355 1060 1310"/>
          </g>
          <g class="tubes">
            <g id="brace"><path d="M918 380 1066 680M1046 380 902 675M915 690 1033 850M1050 690 935 850M898 690 930 840M1068 690 1035 830M935 700 1030 850M1030 700 935 850M940 850 1090 985M1030 850 880 990M880 1000 935 1160M1088 1000 1040 1170M935 1005 1033 1170M1030 1010 935 1170M935 1180 1110 1350M1035 1180 860 1355M862 1365 935 1545M1108 1365 1040 1530M935 1370 1035 1520M1035 1370 935 1520"/><path d="M920 373H1046M895 685H1072M935 835H1033M935 845H1033M878 998H1088M935 1165H1033M935 1187H1033M857 1360 935 1368 1035 1368 1110 1360M940 1515H1035M935 1553H1040"/></g>
            <g id="leg"><path d="M917 120V340L895 685 878 998 857 1360 847 1562M1048 120V340L1070 685 1088 998 1110 1360 1126 1562M937 360 932 700V1562M1034 360V1562"/></g>
          </g>
          <use href="#brace" class="lit thin"/><use href="#leg" class="lit"/>
          <g fill="#a09a5c"><path d="M832 110H1155V138H912L832 118zM832 196H1155V216H835zM832 290H1155V306H850L832 300z"/></g>
          <g fill="none" stroke="#8d8754" stroke-width="1.500"><path d="M835 120V290M840 130V290M846 200V290M1154 120V290M875 125V290M884 130V290M961 130V290M968 130V290M1004 130V290M1102 120V290M837 125 880 195 912 130M915 130 961 195 1004 190 1046 125M1050 130 1102 195 1154 125M837 288 880 205 912 285M846 288 890 205M917 285 961 205 1004 285 1046 215M1050 288 1102 205 1154 288M920 290 968 210"/></g>
          <path d="M1050 130 1102 195M1102 205 1152 288" stroke="#8d8754" stroke-width="3"/>
          <path d="M917 120V300M1048 120V300" stroke="#a8a268" stroke-width="4"/>
          <path d="M832 109 1155 107M832 194 1155 192M832 290 1155 287" stroke="#0f0" stroke-width="2"/><path d="M920 343H1044" stroke="#0e0" stroke-width="3"/>
          <path d="M832 112H935M832 292H912M1100 290H1155" stroke="#060" stroke-width="1" stroke-dasharray="2 2"/>
          <g fill="#8ec8f0"><path d="M889 680h12v10h-12zM1065 680h12v10h-12zM1074 668h5v12h-5zM872 992h11v10h-11zM1083 992h11v10h-11zM1093 960h5v9h-5zM895 962h4v9h-4zM851 1355h11v10h-11zM1104 1355h11v10h-11zM1112 1292h5v10h-5zM871 1292h5v10h-5z"/></g>
          <path d="M108 1298Q155 1310 156 1370H108z" fill="#554e50"/><path d="M108 1332Q132 1338 132 1370H108z" fill="#777"/>
          <path d="M103 1385V1280" stroke="red" stroke-width="4"/><path d="M103 1270 91 1286H116z" fill="#900"/>
          <ellipse cx="101" cy="1374" rx="6" ry="12" fill="#0b0"/>
          <path d="M103 1378H162" stroke="#00f" stroke-width="5"/><path d="M162 1362 174 1378 162 1393z" fill="#00a"/>
          <path d="M103 1382V1290" stroke="red" stroke-width="3"/>
        </g>
        <text class="hud" x="1558" y="590">20 Apr 2026 16:31</text><text class="hud" x="1558" y="609">Model_SpectralFatigue_Done</text><text class="hud" x="1558" y="627">Analysis_StaticSpectral</text>
        <text class="ax" x="1611" y="1030" fill="#d00000">Z</text><text class="ax" x="1655" y="1073" fill="#0000a8">X</text>
      </svg>
    </div>
  </div>
  <div class="cmd">
    <div class="vhandle"><button aria-label="Close command panel">x</button><i></i></div>
    <div class="cbody">
      <div class="cedit"><span class="prompt">&gt;</span><textarea aria-label="Command line"></textarea><i class="caret"></i></div>
      <div class="csb"><i></i></div>
      <div class="ctabs">
        <button class="nav" aria-label="Previous tab"><svg viewBox="0 0 16 16"><path d="M10 4v8L6 8z"/></svg></button><button class="nav" aria-label="Next tab"><svg viewBox="0 0 16 16"><path d="M7 4v8l4-4z"/></svg></button>
        <svg class="first-slant" viewBox="0 0 5 17"><path d="M0 0 4 17"/></svg>
        <button class="ct">Messages</button><svg class="slant"><use href="#slant"/></svg>
        <button class="ct on">Command Line</button><svg class="slant"><use href="#slant"/></svg>
        <button class="ct">Visual Clipboard</button><svg class="slant"><use href="#slant"/></svg>
        <button class="ct">Defaults</button><svg class="first-slant" viewBox="0 0 5 17"><path d="M5 0 1 17"/></svg>
      </div>
    </div>
  </div>
  <div class="status"></div>
</section>
</main>
</body>
</html>
```
FILE: styles.css
```css
* { box-sizing: border-box; }
body { margin: 0; background: #cbcbcb; overflow: hidden; }
button, input, select, textarea { font: inherit; color: inherit; border: 0; padding: 0; margin: 0; background: none; }
h2, h3, h4, p, ul, dl, dd { margin: 0; padding: 0; font: inherit; list-style: none; }
.defs { position: absolute; width: 0; height: 0; }
.desk { display: grid; grid-template-columns: 1153fr 1164fr; column-gap: 83px; padding-top: 435px; min-height: 100vh; align-items: start; overflow: hidden; }

/* Modern workspace */
.app { margin-left: -40px; min-height: 922px; display: flex; flex-direction: column; background: #111227; color: #b9bac2; font: 12px/16px Inter, sans-serif; }
.app svg { fill: none; stroke: currentColor; stroke-width: 2; stroke-linecap: round; stroke-linejoin: round; display: block; }
.bar { height: 47px; display: flex; align-items: center; gap: 2px; padding: 0 8px 2px 7px; background: #1a1b2e; border-bottom: 1px solid #26273a; }
.ib { width: 28px; height: 28px; display: grid; place-items: center; color: #77777f; position: relative; }
.ib svg { width: 16px; height: 16px; stroke-width: 1.5; }
.bell::after { content: ""; position: absolute; top: 4px; right: 4px; width: 6px; height: 6px; border-radius: 3px; background: #1858d8; }
.rule { width: 1px; height: 28px; background: #2a2b40; margin: 0 5px; }
.rule-l { margin: 0 9px 0 6px; }
.tabs { display: flex; gap: 1px; margin-right: auto; }
.tab { height: 30px; padding: 0 12px; border-radius: 6px; font-size: 13px; font-weight: 500; color: #8b8b93; }
.tab.on { background: #25263c; color: #f4f4f8; font-weight: 600; }
.ready { height: 31px; display: flex; align-items: center; gap: 9px; padding: 0 11px; margin-right: 6px; border: 1px solid #1f2034; border-radius: 8px; background: #0c0d1c; color: #a6a6ae; }
.ready i { width: 8px; height: 8px; border-radius: 4px; background: #34355a; }
.run { height: 31px; display: flex; align-items: center; gap: 9px; padding: 0 15px; border-radius: 7px; background: #155dfc; color: #e6edff; font-size: 13px; font-weight: 600; }
.run svg { width: 14px; height: 14px; }
.avatar { width: 28px; height: 28px; margin-left: 4px; border-radius: 14px; background: #8f3cf6; color: #fff; font-size: 11px; font-weight: 600; }
.work { flex: 1; display: grid; grid-template-columns: 1fr 274px; }
.left { display: flex; flex-direction: column; }
.viewport { position: relative; min-height: 518px; background: radial-gradient(ellipse 440px 290px at 455px 260px, #0e1130 0, #0e1028 45%, #0b0b1b 100%); }
.scene { position: absolute; inset: 0; width: 100%; height: 100%; }
.scene text { font: 8px "DejaVu Sans Mono", monospace; stroke: none; }
.app .scene { stroke: none; stroke-width: 1; }
.dim { fill: #4a4c72; } .msl { fill: #203e6c; } .bed { fill: #20213c; }
.vt { position: absolute; top: 12px; display: flex; gap: 7px; }
.vt-l { left: 20px; gap: 5px; } .vt-r { right: 12px; }
.seg { display: flex; height: 30px; padding-left: 23px; border: 1px solid #25263c; border-radius: 8px; overflow: hidden; background: #15162a; font-size: 11px; font-weight: 500; color: #7d7d85; }
.seg button { padding: 0 12px; }
.seg .on { background: #10235c; color: #4a90ea; border-left: 1px solid #1e3f74; padding: 0 11px; }
.vb { width: 29px; height: 29px; display: grid; place-items: center; border: 1px solid #22233a; border-radius: 8px; background: #15162a; color: #85858f; }
.vb svg { width: 16px; height: 16px; stroke-width: 1.5; }
.vb.on { border-color: #1e4070; color: #4a90e8; }
.vb.on svg { stroke-width: 2; }
.coords { position: absolute; left: 20px; bottom: 12px; height: 30px; display: flex; align-items: center; gap: 8px; padding: 0 12px 0 19px; border: 1px solid #25263c; border-radius: 8px; background: #15162a; font: 10px "DejaVu Sans Mono", monospace; color: #74747e; }
.coords b { color: #28508a; }
.coords i { width: 1px; height: 11px; background: #34355a; }
.cube { position: absolute; right: 11px; bottom: 12px; width: 64px; height: 64px; display: grid; place-items: center; border: 1px solid #20213a; border-radius: 8px; background: #15162a; }
.cube svg { width: 41px; height: 41px; stroke-width: 1; }
.chat { flex: 1; display: flex; flex-direction: column; border-top: 1px solid #26273a; padding: 0 15px 9px 12px; }
.chead { height: 41px; display: flex; align-items: center; gap: 6px; padding: 0 1px 1px 17px; }
.chead h2 { font-size: 13px; font-weight: 600; color: #a9aab3; margin-right: 4px; }
.beta { margin-right: auto; height: 20px; padding: 0 6px; border: 1px solid #383a78; border-radius: 4px; background: #24264e; color: #6c6cf0; font: 600 10px/18px Inter, sans-serif; }
.ci { color: #74747c; width: 16px; }
.ci svg { width: 14px; height: 14px; stroke-width: 1.5; }
.ci svg.big { width: 16px; height: 16px; }
.log { flex: 1; padding: 11px 0 0 21px; }
.bubble { width: 723px; padding: 8px 11px; border: 1px solid #26273c; border-radius: 12px; background: #191a2e; font-size: 12px; line-height: 20px; color: #c0c1c9; }
.meta { display: flex; align-items: center; gap: 5px; height: 26px; padding-left: 2px; font-size: 10px; color: #4c4d62; }
.meta span { margin-right: 4px; }
.meta svg { width: 13px; height: 13px; }
.chips { display: flex; gap: 5px; margin-left: -15px; }
.chips button { height: 29px; display: flex; align-items: center; gap: 6px; padding: 0 10px; border: 1px solid #25263c; border-radius: 8px; background: #161729; color: #868690; font-size: 11px; white-space: nowrap; }
.chips svg { width: 12px; height: 12px; }
.ask { height: 43px; margin-top: 12px; display: flex; align-items: center; gap: 8px; padding: 0 12px 0 30px; border: 1px solid #2a2b40; border-radius: 10px; background: #191a2e; }
.ask input { flex: 1; font-size: 12px; outline: 0; }
.ask input::placeholder { color: #5a5b68; }
.ask kbd { padding: 0 5px; border-radius: 4px; background: #23243a; color: #4a4b62; font: 10px/19px "DejaVu Sans Mono", monospace; }
.ask button { width: 26px; height: 26px; display: grid; place-items: center; border-radius: 8px; background: #25263a; color: #75757f; }
.ask svg { width: 14px; height: 14px; }
.note { display: flex; justify-content: space-between; height: 23px; align-items: flex-end; margin: 0 4px 1px -12px; font-size: 10px; color: #3c3d54; }
.props { border-left: 1px solid #26273a; }
.phead { height: 48px; display: flex; align-items: center; gap: 9px; padding: 0 18px 2px 16px; border-bottom: 1px solid #26273a; }
.phead h2 { font-size: 13px; font-weight: 600; color: #c0c1c8; }
.phead svg { width: 11px; height: 11px; color: #66666f; }
.phead > svg { margin-right: auto; }
.phead button svg { width: 14px; height: 14px; }
.grp { border-bottom: 1px solid #24253a; }
.grp h3 { height: 36px; display: flex; align-items: center; gap: 8px; padding-left: 17px; font-size: 11px; font-weight: 600; letter-spacing: .5px; color: #70707a; }
.grp h3 svg { width: 10px; height: 10px; stroke-width: 2.5; }
.grp dl { padding: 0 12px 11px 16px; }
.grp dl div { display: flex; justify-content: space-between; line-height: 30px; }
.grp dt { color: #777781; }
.grp dd { color: #cccdd3; }
.num dd { font: 11px/30px "DejaVu Sans Mono", monospace; }

/* Classic workspace */
.win { min-width: 0; overflow: hidden; background: #eee; color: #101020; font: 11px/16px "Open Sans", sans-serif; min-height: 922px; display: flex; flex-direction: column; }
.menu { display: flex; gap: 15px; height: 19px; padding: 0 5px 2px; background: #fff; border-bottom: 1px solid #a0a0a0; }
.row { display: flex; align-items: center; height: 30px; background: #fff; border-bottom: 1px solid #a0a0a0; overflow: hidden; flex: none; }
.menu + .row { height: 31px; }
.row.last { height: 29px; border-bottom: 0; }
.grip { flex: none; width: 9px; height: 30px; border-left: 1px solid #a0a0a0; display: grid; place-items: center; }
.grip::before { content: ""; width: 2px; height: 20px; background: repeating-linear-gradient(#bbb 0 2px, #fff 2px 4px); }
.grip.first { width: 5px; border: 0; }
.band { display: flex; align-items: center; height: 24px; background: #eee; flex: none; }
.t { width: 24px; height: 22px; display: grid; place-items: center; flex: none; border: 1px solid transparent; border-radius: 2px; }
.t svg, .combo svg { width: 16px; height: 16px; display: block; shape-rendering: crispEdges; flex: none; }
.t.on { background: #cce8ff; border-color: #99d1ff; }
.a { width: 15px; height: 22px; display: grid; place-items: center; flex: none; }
.a::before { content: ""; border: 4px solid transparent; border-top: 4px solid #222; border-bottom: 0; }
.t.sp, .a.sp, .all.on, .a.on { background: #bcdaf5; border: 1px solid #99c8f0; }
.all { font: 700 11px/20px "Liberation Sans", sans-serif; color: #000080; }
.sep { width: 8px; height: 19px; flex: none; border-left: 1px solid #8a8a80; margin-left: 2px; margin-right: -2px; }
.combo { position: relative; display: flex; align-items: center; height: 22px; padding-left: 4px; background: #fff; border: 1px solid #7a7a86; font-size: 12px; flex: none; }
.combo.soft { border-color: #ddd; padding-left: 2px; }
.combo select { flex: 1; min-width: 0; height: 20px; appearance: none; outline: 0; }
.combo::after { content: ""; position: absolute; right: 7px; top: 6px; width: 5px; height: 5px; border: solid #555; border-width: 0 1px 1px 0; transform: rotate(45deg); }
.w128 { width: 130px; } .w130 { width: 130px; } .w170 { width: 170px; }
.edge { width: 1px; height: 30px; background: #999; }
.mid { flex: 1; display: grid; grid-template-columns: 315px 1fr; min-height: 562px; }
.dock { display: flex; flex-direction: column; padding: 0 4px 4px 1px; border-right: 2px solid #808080; border-bottom: 1px solid #999; font-family: Roboto, sans-serif; }
.handle { height: 16px; display: flex; align-items: center; gap: 5px; padding-left: 1px; border-top: 1px solid #a0a0a0; }
.handle i { flex: 1; height: 5px; border: solid #a0a0a0; border-width: 1px 0; background: #fff; }
.handle button, .vhandle button { width: 9px; font: 700 11px/11px "Liberation Sans", sans-serif; color: #000; }
.panes { flex: 1; display: grid; grid-template-columns: 178px 1fr; gap: 4px; }
.pane { position: relative; display: flex; flex-direction: column; min-width: 0; background: #fff; border: solid #696969; border-width: 2px 1px 1px 2px; border-right-color: #fff; border-bottom-color: #fff; }
.pane li { display: flex; align-items: center; white-space: nowrap; }
.pane svg { width: 16px; height: 14px; display: block; flex: none; }
.tree ul { position: relative; flex: 1; }
.tree ul::before { content: ""; position: absolute; left: 20px; top: 14px; height: 138px; border-left: 1px dotted #777; }
.tree li { height: 16px; padding-left: 16px; }
.tree .root { padding-left: 0; }
.tree .root span { background: #eee; flex: 1; }
.tree span { padding-left: 4px; }
.box { position: relative; width: 9px; height: 9px; margin-right: 6px; background: #fff; border: 1px solid #8a94a4; border-radius: 1px; }
.box::before { content: ""; position: absolute; left: 1px; right: 1px; top: 3px; height: 1px; background: #2a5a9a; }
.box::after { content: ""; position: absolute; top: 1px; bottom: 1px; left: 3px; width: 1px; background: #2a5a9a; }
.box.minus { margin: 0 7px 0 -4px; } .box.minus::after { display: none; }
.leaf { width: 10px; margin: 0 0 0 5px; border-top: 1px dotted #777; }
.sb { height: 17px; background: #eee; display: flex; align-items: center; }
.sb i { height: 2px; background: #868686; }
.thumb1 { width: 133px; margin-left: 25px; } .thumb2 { width: 58px; margin-left: 17px; }
.list h4 { height: 25px; padding-left: 6px; line-height: 25px; }
.list ul { flex: 1; }
.list li { height: 17px; gap: 2px; padding-left: 4px; }
.view3d { position: relative; background: #000; border-top: 2px solid #808080; overflow: hidden; }
.jacket { position: absolute; inset: 0; width: 100%; height: 100%; display: block; }
.jacket path { vector-effect: non-scaling-stroke; }
.tubes { fill: none; stroke: #5f5b47; stroke-width: 3; }
.tubes #leg { stroke-width: 4; }
.lit { fill: none; stroke: #98947a; stroke-width: 2; } .lit.thin { stroke-width: 1; }
.hud { font: 17px "Liberation Sans", sans-serif; fill: #fff; }
.ax { font: 14px "Liberation Sans", sans-serif; }
.cmd { display: flex; height: 198px; padding-top: 4px; border-top: 1px solid #fff; }
.vhandle { width: 13px; display: flex; flex-direction: column; align-items: flex-start; gap: 2px; padding-left: 1px; padding-bottom: 5px; }
.vhandle i { flex: 1; width: 5px; margin-left: 2px; border: solid #a0a0a0; border-width: 0 1px; background: #fff; }
.cbody { flex: 1; display: flex; flex-direction: column; border: solid #696969; border-width: 2px 0 0 2px; margin-bottom: 5px; }
.cedit { position: relative; flex: 1; display: flex; background: #fff; }
.prompt { width: 14px; background: #c8c8c8; font: 700 14px/20px "Liberation Sans", sans-serif; text-align: right; padding-right: 2px; color: #000; }
.cedit textarea { flex: 1; resize: none; outline: 0; }
.caret { position: absolute; left: 15px; top: 0; width: 1px; height: 19px; background: #00f; }
.csb { height: 17px; background: #eee; padding: 7px 0 0 17px; }
.csb i { display: block; width: 17px; height: 2px; background: #868686; }
.ctabs { display: flex; height: 18px; border-top: 1px solid #000; font: 11px/16px Roboto, sans-serif; }
.nav { width: 18px; height: 16px; border: 1px solid #999; border-left-color: #fff; border-top-color: #fff; display: grid; place-items: center; }
.nav svg { width: 16px; height: 16px; fill: #999; }
.ct { padding: 0 1px 0 3px; border-bottom: 1px solid #888; white-space: nowrap; }
.ct.on { background: #fff; border-bottom-color: #fff; }
.slant { width: 10px; height: 17px; }
.first-slant { width: 5px; height: 17px; fill: none; stroke: #000; }
.status { height: 21px; border-top: 1px solid #999; box-shadow: inset 0 2px #fff, inset 0 3px #ccc; }
```
